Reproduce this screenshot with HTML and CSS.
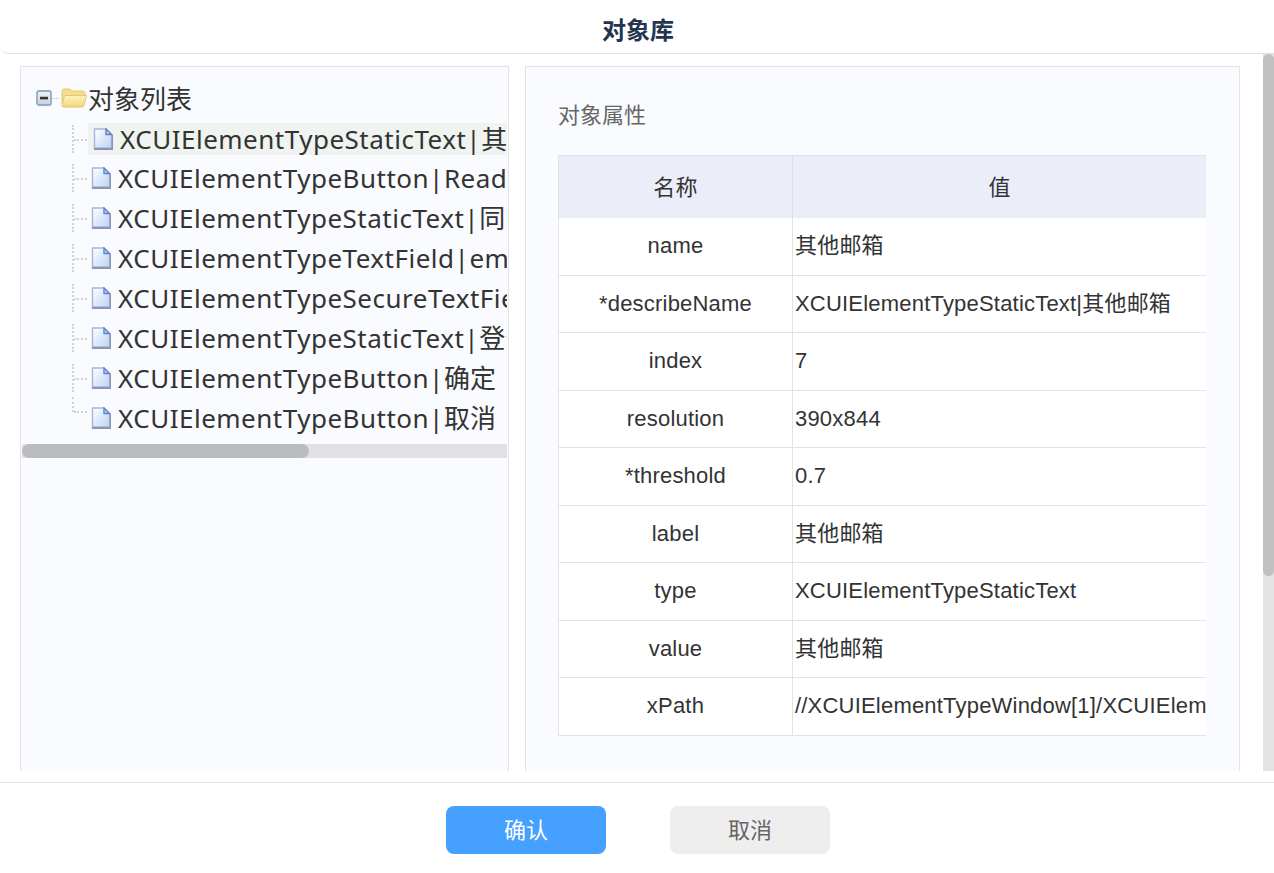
FILE: index.html
```html
<!DOCTYPE html>
<html lang="zh">
<head>
<meta charset="utf-8">
<title>对象库</title>
<link rel="stylesheet" href="styles.css">
</head>
<body>
<svg class="defs" width="0" height="0" aria-hidden="true">
  <defs>
    <linearGradient id="pg" x1="0" y1="0" x2="1" y2="1"><stop offset="0" stop-color="#ffffff"/><stop offset="1" stop-color="#bcd4f6"/></linearGradient>
    <linearGradient id="fd" x1="0" y1="0" x2="0" y2="1"><stop offset="0" stop-color="#fff4bd"/><stop offset="1" stop-color="#f2d67c"/></linearGradient>
    <linearGradient id="tg" x1="0" y1="0" x2="0" y2="1"><stop offset="0" stop-color="#f2f4f6"/><stop offset="1" stop-color="#c6cfd9"/></linearGradient>
    <symbol id="page" viewBox="0 0 20 22">
      <path d="M1.5 1H13L18.5 6.5V20H1.5Z" fill="url(#pg)" stroke="#a9b6dc" stroke-width="1.4"/>
      <path d="M13 1V6.5H18.5Z" fill="#c7d9f7" stroke="#5f7fd0" stroke-width="1.4"/>
      <path d="M1 21H19.5V7" fill="none" stroke="#8d93b4" stroke-width="1.8"/>
    </symbol>
  </defs>
</svg>
<div class="dialog">
  <header class="head">对象库</header>
  <main class="main">
    <div class="scroller">
      <div class="cols">
        <section class="left">
          <div class="tree">
            <div class="tree-inner">
              <div class="root">
                <svg class="toggle" width="16" height="16" viewBox="0 0 16 16"><rect x="1" y="1" width="14" height="14" rx="2" fill="url(#tg)" stroke="#8fadc8" stroke-width="1.8"/><rect x="4" y="6.8" width="8" height="2.6" fill="#333"/></svg>
                <span class="root-dots"></span>
                <svg class="folder" width="26" height="20" viewBox="0 0 26 20"><path d="M1 16V3Q1 1 3 1H9L11 3H22Q24 3 24 5V9H4Z" fill="#f4dd8e" stroke="#e6cb78"/><path d="M1 17.5L3.5 7.5H25.5L23 17.5Q22.6 19 21 19H3Q0.8 19 1 17.5Z" fill="url(#fd)" stroke="#e6c96f"/></svg>
                <span class="root-label">对象列表</span>
              </div>
              <div class="row sel"><span class="conn"></span><span class="item"><svg class="doc"><use href="#page"/></svg>XCUIElementTypeStaticText|<span class="cjk">其他邮箱</span></span></div>
              <div class="row"><span class="conn"></span><span class="item"><svg class="doc"><use href="#page"/></svg>XCUIElementTypeButton|Read</span></div>
              <div class="row"><span class="conn"></span><span class="item"><svg class="doc"><use href="#page"/></svg>XCUIElementTypeStaticText|<span class="cjk">同意协议并继续操作下一步</span></span></div>
              <div class="row"><span class="conn"></span><span class="item"><svg class="doc"><use href="#page"/></svg>XCUIElementTypeTextField|email</span></div>
              <div class="row"><span class="conn"></span><span class="item"><svg class="doc"><use href="#page"/></svg>XCUIElementTypeSecureTextField|password</span></div>
              <div class="row"><span class="conn"></span><span class="item"><svg class="doc"><use href="#page"/></svg>XCUIElementTypeStaticText|<span class="cjk">登录</span></span></div>
              <div class="row"><span class="conn"></span><span class="item"><svg class="doc"><use href="#page"/></svg>XCUIElementTypeButton|<span class="cjk">确定</span></span></div>
              <div class="row last"><span class="conn"></span><span class="item"><svg class="doc"><use href="#page"/></svg>XCUIElementTypeButton|<span class="cjk">取消</span></span></div>
            </div>
          </div>
          <div class="hbar"><div class="hthumb"></div></div>
        </section>
        <section class="right">
          <h2 class="sub">对象属性</h2>
          <div class="table-wrap">
            <table class="props">
              <thead><tr><th class="c1">名称</th><th>值</th></tr></thead>
              <tbody>
                <tr><td class="c1">name</td><td>其他邮箱</td></tr>
                <tr><td class="c1">*describeName</td><td>XCUIElementTypeStaticText|其他邮箱</td></tr>
                <tr><td class="c1">index</td><td>7</td></tr>
                <tr><td class="c1">resolution</td><td>390x844</td></tr>
                <tr><td class="c1">*threshold</td><td>0.7</td></tr>
                <tr><td class="c1">label</td><td>其他邮箱</td></tr>
                <tr><td class="c1">type</td><td>XCUIElementTypeStaticText</td></tr>
                <tr><td class="c1">value</td><td>其他邮箱</td></tr>
                <tr><td class="c1">xPath</td><td>//XCUIElementTypeWindow[1]/XCUIElementTypeOther[1]/XCUIElementTypeOther[1]</td></tr>
              </tbody>
            </table>
          </div>
        </section>
      </div>
    </div>
    <div class="vbar"><div class="vthumb"></div></div>
  </main>
  <footer class="foot">
    <button class="btn primary" type="button">确认</button>
    <button class="btn plain" type="button">取消</button>
  </footer>
</div>
</body>
</html>
```
FILE: styles.css
```css
* { box-sizing: border-box; }
html, body { margin: 0; height: 100%; background: #fff; overflow: hidden; }
body { font-family: "Liberation Sans", "Noto Sans CJK SC", sans-serif; color: #333; }
.defs { position: absolute; }
.dialog { height: 873px; display: flex; flex-direction: column; }
.head {
  height: 54px; flex: none; border-bottom: 1px solid #e2e2e2; border-bottom-left-radius: 8px;
  display: flex; align-items: center; justify-content: center; padding: 4px 0 0 2px;
  font: 700 24px/34px "Noto Sans CJK SC", sans-serif; color: #24344f;
}
.main { flex: none; height: 717px; display: flex; }
.scroller { flex: 1; min-width: 0; height: 717px; overflow: hidden; }
.vbar { flex: none; width: 11px; background: #e3e3e3; }
.vthumb { height: 522px; background: #c1c1c1; border-radius: 6px; }
.cols { display: flex; gap: 16px; padding: 12px 23px 12px 20px; height: 985px; }
.left, .right { background: #fafbff; border: 1px solid #e3e3e6; height: 961px; }
.left { width: 489px; flex: none; padding: 0 1px; }
.right { flex: 1; padding: 30px 32px 0; }
.tree { overflow: hidden; }
.hbar { height: 14px; background: #e0e0e5; }
.hthumb { width: 287px; height: 14px; background: #bbbcc0; border-radius: 7px; }
.tree-inner { width: 830px; padding: 13px 0 6px 13px; font: 26px "Noto Sans", "Noto Sans CJK SC", sans-serif; color: #333; white-space: nowrap; }
.root { display: flex; align-items: center; height: 41px; margin-left: 1px; margin-top: -2px; padding-bottom: 1px; }
.toggle { flex: none; }
.root-dots { width: 7px; border-top: 1px dotted #b9b9c0; margin-right: 2px; }
.folder { flex: none; margin-right: 2px; }
.root-label { margin-left: -1px; }
.row { display: flex; height: 40px; padding-left: 37px; align-items: center; }
.conn { position: relative; width: 16px; height: 28px; flex: none; border-left: 2px dotted #d0d2da; }
.conn::after { content: ""; position: absolute; left: 0; top: 14px; width: 13px; border-top: 2px dotted #d0d2da; }
.row.last .conn { align-self: flex-start; height: 15px; margin-top: -1px; margin-bottom: 15px; }
.item { display: flex; align-items: center; height: 32px; font-size: 26px; line-height: 32px; letter-spacing: 0.5px; }
.cjk { letter-spacing: 0; }
.doc { width: 20px; height: 22px; margin: 0 7px 0 3px; flex: none; }
.row.sel { height: 39px; }
.sel .item { background: #eff4f0; width: 420px; padding-left: 2px; }
.sel .doc { margin-right: 7px; }
.sub { margin: 0 0 20px; font: 400 22px/38px "Liberation Sans", "Noto Sans CJK SC", sans-serif; color: #666; }
.table-wrap { width: 648px; overflow: hidden; }
.props { width: 648px; table-layout: fixed; border-collapse: collapse; font-size: 22px; line-height: 30px; letter-spacing: 0.2px; background: #fff; border-top: 1px solid #e3e3e6; }
.props th { height: 62px; background: #ebedf9; font-weight: 400; text-align: center; border-left: 1px solid #dfe0e6; padding: 2px 0 0; }
.props td { height: 57.5px; padding: 0 0 0 2px; border-bottom: 1px solid #e3e3e3; border-left: 1px solid #e3e3e3; white-space: nowrap; overflow: hidden; }
.props th.c1 { width: 234px; text-align: center; padding: 2px 0 0; }
.props td.c1 { text-align: center; padding: 0; }
.foot { flex: none; margin-top: 11px; height: 91px; border-top: 1px solid #e2e2e2; display: flex; justify-content: center; align-items: flex-start; padding: 23px 0 0 2px; gap: 64px; }
.btn { width: 160px; height: 48px; padding: 0 0 4px; border: 0; border-radius: 8px; font: 22px/30px "Noto Sans CJK SC", sans-serif; }
.primary { background: #46a0ff; color: #fff; }
.plain { background: #eeeeee; color: #666; }
```
